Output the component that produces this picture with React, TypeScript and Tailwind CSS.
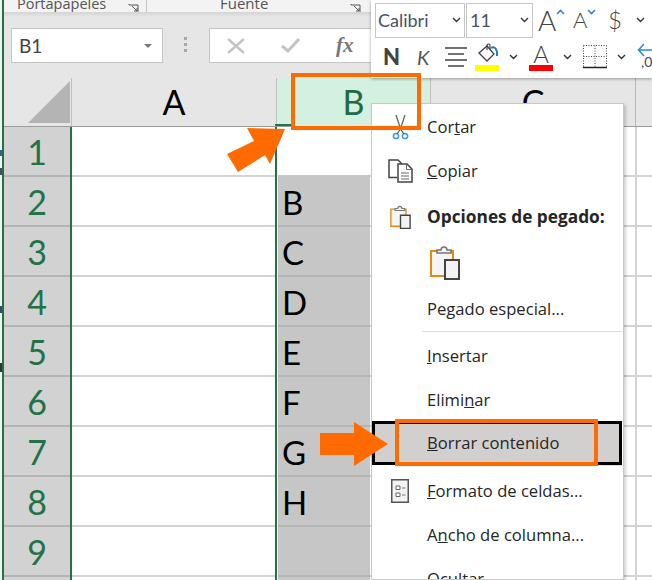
import type { ReactNode } from 'react'

const rows = [
  { n: '1', v: '', sel: false },
  { n: '2', v: 'B', sel: true },
  { n: '3', v: 'C', sel: true },
  { n: '4', v: 'D', sel: true },
  { n: '5', v: 'E', sel: true },
  { n: '6', v: 'F', sel: true },
  { n: '7', v: 'G', sel: true },
  { n: '8', v: 'H', sel: true },
  { n: '9', v: '', sel: true },
  { n: '', v: '', sel: true },
]

function Chevron({ className = '' }: { className?: string }) {
  return (
    <svg width="9" height="6" viewBox="0 0 9 6" className={`shrink-0 ${className}`}>
      <path d="M1 1l3.5 3.5L8 1" fill="none" stroke="#333" strokeWidth="1.4" />
    </svg>
  )
}

function Launcher() {
  return (
    <svg width="12" height="8" viewBox="0 0 12 8">
      <path d="M1 0v1h9V8M4 2l5 5M6 7h3V4" fill="none" stroke="#555" strokeWidth="1" />
    </svg>
  )
}

function MenuItem({ icon, children }: { icon?: ReactNode; children: ReactNode }) {
  return (
    <div className="flex items-center h-[44px] shrink-0">
      <div className="w-[55px] flex justify-center shrink-0 pl-[1px]">{icon}</div>
      <div className="text-[16.6px] leading-none text-[#262626] whitespace-nowrap">{children}</div>
    </div>
  )
}

function PasteIcon({ w, h }: { w: number; h: number }) {
  return (
    <svg width={w} height={h} viewBox="0 0 30 35">
      <path d="M1 6h22v25H1z" fill="#f5f5f5" stroke="#e8870e" strokeWidth="2" />
      <path d="M7 8V5h4c0-4 6-4 6 0h4v3z" fill="#f3f3f3" stroke="#777" strokeWidth="1.6" />
      <path d="M15 15h14v19H15z" fill="#f3f3f3" stroke="#444" strokeWidth="2" />
    </svg>
  )
}

function ContextMenu() {
  return (
    <div className="absolute left-[371px] top-[103px] w-[253px] h-[477px] overflow-hidden bg-white border border-[#c8c8c8] shadow-[2px_2px_3px_rgba(0,0,0,0.18)] flex flex-col pt-[1px]">
      <MenuItem
        icon={
          <svg width="17" height="25" viewBox="0 0 17 25">
            <path d="M4 0l5 15M13 0L8 15" fill="none" stroke="#666" strokeWidth="1.3" />
            <circle cx="4" cy="21" r="2.6" fill="none" stroke="#3f9bdc" strokeWidth="1.5" />
            <circle cx="13" cy="21" r="2.6" fill="none" stroke="#3f9bdc" strokeWidth="1.5" />
            <path d="M5 19l3.500-5 3.500 5" fill="none" stroke="#555" strokeWidth="1.2" />
          </svg>
        }
      >
        Cor<u>t</u>ar
      </MenuItem>
      <MenuItem
        icon={
          <svg width="25" height="24" viewBox="0 0 25 24">
            <path d="M9 18.500H1V1h9l4 4" fill="#fff" stroke="#444" strokeWidth="1.500" />
            <path d="M10 5h9l5 5v13H10z" fill="#fff" stroke="#444" strokeWidth="1.500" />
            <path d="M18.500 5v5.500H24M13 14h8M13 17h8M13 20h8" fill="none" stroke="#666" strokeWidth="1" />
          </svg>
        }
      >
        <u>C</u>opiar
      </MenuItem>
      <div className="h-[2px] shrink-0" />
      <MenuItem icon={<PasteIcon w={21} h={24} />}>
        <span className="font-bold text-[17.300px]">Opciones de pegado:</span>
      </MenuItem>
      <div className="h-[46px] shrink-0 pl-[58px] flex items-center">
        <PasteIcon w={30} h={35} />
      </div>
      <div className="h-[2px] shrink-0" />
      <MenuItem>
        Pe<u>g</u>ado especial...
      </MenuItem>
      <div className="h-[1px] ml-[50px] mr-[1px] bg-[#dcdcdc] shrink-0 mb-[2px]" />
      <MenuItem>
        <u>I</u>nsertar
      </MenuItem>
      <MenuItem>
        Elimi<u>n</u>ar
      </MenuItem>
      <div className="-mt-[1px] h-[44px] shrink-0 w-[250px] border-[3px] border-black bg-[#d2d0ce] flex items-center pl-[52px] text-[16.6px] leading-none text-[#262626]">
        <span>
          <u>B</u>orrar contenido
        </span>
      </div>
      <div className="h-[1px] ml-[50px] mr-[1px] bg-[#dcdcdc] shrink-0 mb-[3px]" />
      <MenuItem
        icon={
          <svg width="18" height="24" viewBox="0 0 18 24">
            <path d="M.75.75h16.500v22.500H.75z" fill="#f3f3f3" stroke="#555" strokeWidth="1.500" />
            <path d="M5 7h4v3.500H5zM5 14h4v3.500H5z" fill="#fff" stroke="#666" />
            <path d="M11 9h3.500M11 16h3.500" stroke="#777" />
          </svg>
        }
      >
        <u>F</u>ormato de celdas...
      </MenuItem>
      <MenuItem>
        A<u>n</u>cho de columna...
      </MenuItem>
      <MenuItem>
        <u>O</u>cultar
      </MenuItem>
    </div>
  )
}

function MiniToolbar() {
  return (
    <div className="absolute left-[371px] top-0 w-[281px] h-[78px] bg-white shadow-[0_1px_3px_rgba(0,0,0,0.35)] pl-[4px] pt-[2px] font-['Lato',sans-serif] overflow-hidden">
      <div className="flex items-center h-[36px]">
        <div className="w-[90px] shrink-0 h-[35px] border border-[#c6c6c6] flex items-center justify-between pl-[2px] pr-[3px]">
          <span className="text-[18px] text-[#44546a]">Calibri</span>
          <Chevron />
        </div>
        <div className="w-[67px] shrink-0 h-[35px] border border-[#c6c6c6] ml-[1px] flex items-center justify-between pl-[3px] pr-[3px]">
          <span className="text-[18px] text-[#44546a]">11</span>
          <Chevron />
        </div>
        <span className="ml-[5px] w-[18px] shrink-0 text-[28px] font-light leading-none text-[#444]">A</span>
        <svg width="9" height="6" viewBox="0 0 9 6" className="-mt-[16px] shrink-0">
          <path d="M1 5l3.500-3.500L8 5" fill="none" stroke="#2b88d8" strokeWidth="1.600" />
        </svg>
        <span className="ml-[8px] w-[14px] shrink-0 text-[22px] font-light leading-none text-[#444]">A</span>
        <svg width="9" height="6" viewBox="0 0 9 6" className="-mt-[16px] shrink-0">
          <path d="M1 1l3.500 3.500L8 1" fill="none" stroke="#2b88d8" strokeWidth="1.600" />
        </svg>
        <span className="ml-[12px] w-[14px] shrink-0 text-[24px] font-light leading-none text-[#444]">$</span>
        <Chevron className="ml-[14px]" />
      </div>
      <div className="flex items-center h-[38px]">
        <span className="ml-[8px] w-[34px] shrink-0 text-[22px] font-black leading-none text-[#444]">N</span>
        <span className="w-[28px] shrink-0 text-[20px] italic leading-none text-[#555]">K</span>
        <svg width="22" height="20" viewBox="0 0 22 20" className="shrink-0">
          <path d="M0 1h22M3 7h16M0 13h22M3 19h16" stroke="#444" strokeWidth="1.400" />
        </svg>
        <div className="ml-[8px] w-[24px] shrink-0 h-[28px] flex flex-col items-center justify-between">
          <svg width="24" height="20" viewBox="0 0 24 20">
            <path d="M4 10L12 3l7 8-7 7z" fill="#fff" stroke="#444" strokeWidth="1.300" />
            <path d="M12 7V2.500c0-2 3-2 3 0V7" fill="none" stroke="#444" strokeWidth="1.200" />
            <path d="M16 5c3-2 5 0 6 4v4" fill="none" stroke="#1f7fc4" strokeWidth="2" />
          </svg>
          <div className="w-[24px] h-[6px] bg-[#ffff00]" />
        </div>
        <Chevron className="ml-[10px]" />
        <div className="ml-[11px] w-[24px] shrink-0 h-[28px] flex flex-col items-center justify-between">
          <span className="text-[24px] font-light leading-[21px] text-[#444]">A</span>
          <div className="w-[24px] h-[6px] bg-[#ff0000]" />
        </div>
        <Chevron className="ml-[10px]" />
        <svg width="24" height="24" viewBox="0 0 24 24" className="ml-[11px] shrink-0">
          <path d="M.5.5h23M.5.5v22M23.500.5v22M12 .5v22M.5 11.500h23" fill="none" stroke="#444" strokeDasharray="1 1.500" />
          <path d="M0 22.500h24" stroke="#222" strokeWidth="1.500" />
        </svg>
        <Chevron className="ml-[10px]" />
        <div className="ml-[11px] relative w-[20px] shrink-0 h-[28px]">
          <svg width="20" height="14" viewBox="0 0 20 14" className="absolute top-0 left-0">
            <path d="M19 7H2M7 1L1.500 7 7 13" fill="none" stroke="#2b88d8" strokeWidth="1.500" />
          </svg>
          <span className="absolute top-[12px] left-[4px] text-[14px] leading-none text-[#444]">,0</span>
        </div>
      </div>
    </div>
  )
}

export default function App() {
  return (
    <div className="relative w-[652px] h-[580px] overflow-hidden bg-[#f2f2f2] font-['Lato',sans-serif]">
      <div className="pl-[2px]">
        <div className="border-l-2 border-[#217346] h-[580px] overflow-hidden bg-[#e6e6e6]">
          {/* ribbon bottom */}
          <div className="h-[12px] bg-[#f3f3f3] overflow-hidden flex items-end text-[16px] leading-none text-[#555] font-['Open_Sans',sans-serif]">
            <span className="ml-[13px] mb-[1px] w-[111px] text-[14.500px] whitespace-nowrap">Portapapeles</span>
            <Launcher />
            <div className="w-[1px] h-[12px] bg-[#c6c6c6] ml-[6px]" />
            <span className="ml-[73px] mb-[1px] w-[130px] text-[15px]">Fuente</span>
            <Launcher />
          </div>
          <div className="h-[5px] bg-gradient-to-b from-[#d4d4d4] to-[#e6e6e6]" />

          {/* formula bar */}
          <div className="h-[61px] pt-[11px] pl-[7px] flex items-start">
            <div className="w-[152px] h-[35px] bg-white border border-[#c6c6c6] flex items-center justify-between pl-[7px] pr-[10px]">
              <span className="text-[19px] leading-none text-[#444]">B1</span>
              <div className="w-0 h-0 border-x-[4px] border-x-transparent border-t-[4px] border-t-[#777]" />
            </div>
            <div className="ml-[21px] mt-[9px] flex flex-col gap-[3px]">
              <div className="w-[3px] h-[3px] bg-[#a8a8a8]" />
              <div className="w-[3px] h-[3px] bg-[#a8a8a8]" />
              <div className="w-[3px] h-[3px] bg-[#a8a8a8]" />
            </div>
            <div className="ml-[22px] w-[300px] h-[35px] bg-white border border-[#c6c6c6] flex items-center">
              <svg width="18" height="16" viewBox="0 0 18 16" className="ml-[17px]">
                <path d="M1 1l16 14M17 1L1 15" stroke="#c4c4c4" strokeWidth="2.400" />
              </svg>
              <svg width="19" height="15" viewBox="0 0 19 15" className="ml-[36px]">
                <path d="M1 8l6 5L18 1" fill="none" stroke="#c4c4c4" strokeWidth="3" />
              </svg>
              <span className="ml-[36px] text-[21px] leading-none italic font-bold text-[#777] font-['Liberation_Serif',serif]">fx</span>
            </div>
          </div>

          {/* column headers */}
          <div className="h-[48px] flex">
            <div className="w-[68px] flex items-end justify-end pb-[3px] pr-[1px] border-r border-[#c0c0c0]">
              <svg width="42" height="42" viewBox="0 0 42 42">
                <path d="M42 0v42H0z" fill="#b4b4b4" />
              </svg>
            </div>
            <div className="w-[205px] flex items-center justify-center border-r border-[#c0c0c0] text-[34px] leading-none text-black">A</div>
            <div className="relative w-[154px] bg-[#d3f0e0] border-r border-[#c0c0c0] flex items-center justify-center text-[34px] leading-none text-[#1f6b43]">
              B
              <div className="absolute -left-[2px] bottom-0 w-[18px] h-[2px] bg-[#217346]" />
            </div>
            <div className="w-[205px] flex items-center justify-center border-r border-[#b8b8b8] text-[34px] leading-none text-black">C</div>
          </div>

          {/* grid */}
          <div className="border-t border-[#9c9c9c]">
            {rows.map((r, i) => (
              <div key={i} className="h-[50px] flex">
                <div className="w-[66px] shrink-0 bg-[#d2d2d2] border-b-2 border-[#b4b4b4] flex items-center justify-center pt-[1px] text-[34px] leading-none text-[#217346]">
                  {r.n}
                </div>
                <div className="w-[207px] shrink-0 bg-white border-x-2 border-x-[#217346]">
                  <div className="h-full border-b-2 border-[#d4d4d4]" />
                </div>
                <div className="w-[1px] bg-white shrink-0" />
                <div
                  className={`w-[92px] shrink-0 border-b-2 flex items-center pl-[4px] pt-[2px] text-[33px] leading-none text-black ${
                    r.sel ? 'bg-[#c6c6c6] border-[#b4b4b4]' : 'bg-white border-[#c6c6c6]'
                  }`}
                >
                  {r.v}
                </div>
                <div className="flex-1 bg-white border-b-2 border-[#d4d4d4] flex">
                  <div className="w-[267px] shrink-0 border-r-2 border-[#d4d4d4]" />
                </div>
              </div>
            ))}
          </div>
        </div>
      </div>

      {/* bits of the window behind, left of the sheet */}
      <div className="absolute left-0 top-[150px] w-[2px] h-[6px] bg-[#2f5f9e]" />
      <div className="absolute left-0 top-[168px] w-[2px] h-[7px] bg-[#4a4a6a]" />
      <div className="absolute left-0 top-[306px] w-[2px] h-[7px] bg-[#3a4a6a]" />
      <div className="absolute left-0 top-[363px] w-[2px] h-[9px] bg-[#333]" />

      <MiniToolbar />
      <div className="font-['Open_Sans',sans-serif]">
        <ContextMenu />
      </div>

      {/* callouts */}
      <div className="absolute left-[291px] top-[73px] w-[130px] h-[57px] border-4 border-[#ff6b00]" />
      <div className="absolute left-[395px] top-[419px] w-[203px] h-[47px] border-4 border-[#ff6b00]" />
      <svg width="60" height="46" viewBox="0 0 60 46" className="absolute left-[227px] top-[127px]">
        <path d="M58 2L20 1l7 13L0 27l11 18 27-17 5 9z" fill="#ff6b00" />
      </svg>
      <svg width="68" height="44" viewBox="0 0 68 44" className="absolute left-[320px] top-[422px]">
        <path d="M0 11h34V0l34 22-34 22V33H0z" fill="#ff6b00" />
      </svg>
    </div>
  )
}
